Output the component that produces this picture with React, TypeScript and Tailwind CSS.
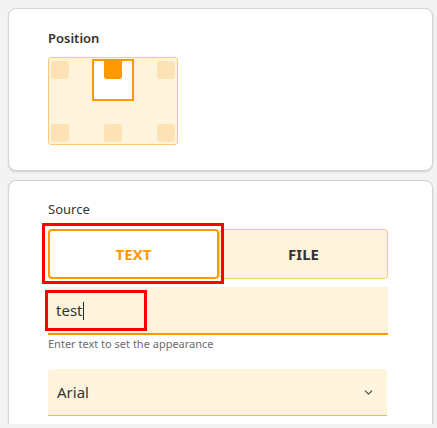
import { ChevronDown } from 'lucide-react';

const font = { fontFamily: '"Noto Sans", "Open Sans", sans-serif' };

function Dot({ className = '' }: { className?: string }) {
  return <div className={`h-[18px] w-[18px] rounded-[3px] bg-[#fde3b3] ${className}`} />;
}

function PositionCard() {
  return (
    <div className="rounded-lg border border-[#d4d4d4] bg-white pl-[39px] pt-[19px] pb-[25px] shadow-[0_1px_2px_rgba(0,0,0,0.15)]">
      <div className="text-[13px] leading-[20px] font-semibold text-[#333]">Position</div>
      <div className="mt-[9px] w-[130px] h-[88px] rounded-[3px] border border-[#fcc97a] bg-[#fef3dc] px-[2px] pt-[1px] flex flex-col justify-between pb-[2px]">
        <div className="flex justify-between items-start">
          <Dot className="mt-[2px]" />
          <div className="w-[42px] h-[42px] border-2 border-[#ff9800] bg-white flex justify-center">
            <div className="w-[18px] h-[18px] bg-[#ff9800] rounded-b-[3px]" />
          </div>
          <Dot className="mt-[2px]" />
        </div>
        <div className="flex justify-between">
          <Dot />
          <Dot />
          <Dot />
        </div>
      </div>
    </div>
  );
}

function SourceCard() {
  return (
    <div className="rounded-lg border border-[#d4d4d4] bg-white pl-[39px] pr-[44px] pt-[18px] shadow-[0_1px_2px_rgba(0,0,0,0.15)]">
      <div className="text-[13px] leading-[20px] text-[#333]">Source</div>
      <div className="relative mt-[10px] flex h-[50px]">
        <button className="w-[171px] rounded-[4px] border-2 border-[#ff9800] bg-white text-[15px] font-bold text-[#ff9800]">
          TEXT
        </button>
        <button className="flex-1 rounded-[4px] border border-[#fcc97a] bg-[#fef3dc] text-[15px] font-bold text-[#333]">
          FILE
        </button>
        <div className="absolute left-[-6px] top-[-6px] w-[182px] h-[61px] border-[3px] border-[#ff0000]" />
      </div>
      <div className="relative mt-[8px] h-[48px] bg-[#fef3dc] border-b-2 border-[#ff9800] flex items-center pl-2 pt-[1px]">
        <span className="text-[15px] text-[#333]">test</span>
        <span className="ml-[1px] w-px h-[18px] bg-[#222]" />
        <div className="absolute left-[-3px] top-[3px] w-[102px] h-[41px] border-[3px] border-[#ff0000]" />
      </div>
      <div className="mt-[2px] text-[11px] leading-[14px] text-[#6b6b6b]">Enter text to set the appearance</div>
      <div className="mt-[18px] h-[47px] rounded-t-[4px] bg-[#fef3dc] border-b-[1.5px] border-[#f9b454] flex items-center justify-between pl-[9px] pr-[12px] mr-px">
        <span className="text-[15px] text-[#333]">Arial</span>
        <ChevronDown className="w-[13px] h-[13px] text-[#555]" strokeWidth={2.5} />
      </div>
      <div className="mt-[8px] flex items-start h-6">
        <div className="ml-[2px] w-[75px] h-6 bg-[#fef3dc] pl-[7px]">
          <div className="w-[17px] h-6 bg-[#f5c38a]" />
        </div>
        <div className="ml-[149px] w-[46px] h-6 bg-[#f9c48a]" />
      </div>
    </div>
  );
}

export default function App() {
  return (
    <div className="h-[428px] bg-[#f3f3f3] overflow-hidden" style={font}>
      <div className="h-[424px] overflow-hidden pl-2 pr-1 pt-2 flex flex-col gap-[9px]">
        <PositionCard />
        <SourceCard />
      </div>
    </div>
  );
}
